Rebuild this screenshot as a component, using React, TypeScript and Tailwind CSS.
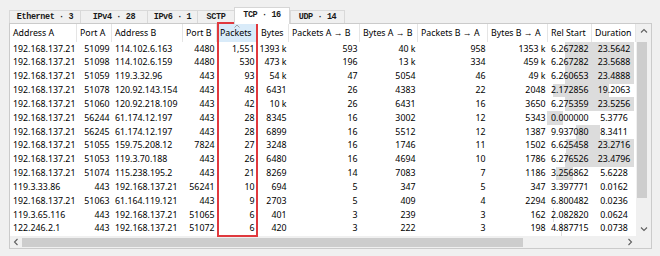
import React from "react";

type Col = { label: string; w: number; align: "l" | "r" | "c" };

const cols: Col[] = [
  { label: "Address A", w: 67, align: "l" },
  { label: "Port A", w: 35, align: "r" },
  { label: "Address B", w: 71, align: "l" },
  { label: "Port B", w: 34, align: "r" },
  { label: "Packets", w: 41, align: "r" },
  { label: "Bytes", w: 31, align: "r" },
  { label: "Packets A \u2192 B", w: 71, align: "r" },
  { label: "Bytes A \u2192 B", w: 58, align: "r" },
  { label: "Packets B \u2192 A", w: 70, align: "r" },
  { label: "Bytes B \u2192 A", w: 60, align: "r" },
  { label: "Rel Start", w: 44, align: "l" },
  { label: "Duration", w: 44, align: "c" },
];

const rows: string[][] = [
  ["192.168.137.21", "51099", "114.102.6.163", "4480", "1,551", "1393 k", "593", "40 k", "958", "1353 k", "6.267282", "23.5642"],
  ["192.168.137.21", "51098", "114.102.6.159", "4480", "530", "473 k", "196", "13 k", "334", "459 k", "6.267282", "23.5688"],
  ["192.168.137.21", "51059", "119.3.32.96", "443", "93", "54 k", "47", "5054", "46", "49 k", "6.260653", "23.4888"],
  ["192.168.137.21", "51078", "120.92.143.154", "443", "48", "6431", "26", "4383", "22", "2048", "2.172856", "19.2063"],
  ["192.168.137.21", "51060", "120.92.218.109", "443", "42", "10 k", "26", "6431", "16", "3650", "6.275359", "23.5256"],
  ["192.168.137.21", "56244", "61.174.12.197", "443", "28", "8345", "16", "3002", "12", "5343", "0.000000", "5.3776"],
  ["192.168.137.21", "56245", "61.174.12.197", "443", "28", "6899", "16", "5512", "12", "1387", "9.937080", "8.3411"],
  ["192.168.137.21", "51055", "159.75.208.12", "7824", "27", "3248", "16", "1746", "11", "1502", "6.625458", "23.2716"],
  ["192.168.137.21", "51053", "119.3.70.188", "443", "26", "6480", "16", "4694", "10", "1786", "6.276526", "23.4796"],
  ["192.168.137.21", "51074", "115.238.195.2", "443", "21", "8269", "14", "7083", "7", "1186", "3.256862", "5.6228"],
  ["119.3.33.86", "443", "192.168.137.21", "56241", "10", "694", "5", "347", "5", "347", "3.397771", "0.0162"],
  ["192.168.137.21", "51063", "61.164.119.121", "443", "9", "2703", "5", "409", "4", "2294", "6.800482", "0.0236"],
  ["119.3.65.116", "443", "192.168.137.21", "51065", "6", "401", "3", "239", "3", "162", "2.082820", "0.0624"],
  ["122.246.2.1", "443", "192.168.137.21", "51072", "6", "420", "3", "222", "3", "198", "4.887715", "0.0738"],
];

const tabs = [
  { label: "Ethernet \u00b7 3", w: 71 },
  { label: "IPv4 \u00b7 28", w: 67 },
  { label: "IPv6 \u00b7 1", w: 50 },
  { label: "SCTP", w: 37 },
  { label: "TCP \u00b7 16", w: 56, sel: true },
  { label: "UDP \u00b7 14", w: 55 },
];

const T = 29.84;
const barLeft = 537;
const barSpan = 87;

function Chevron({ dir }: { dir: "up" | "down" | "left" | "right" }) {
  const d =
    dir === "up"
      ? "M1 4.5 L4 1.5 L7 4.5"
      : dir === "down"
      ? "M1 1.5 L4 4.5 L7 1.5"
      : dir === "left"
      ? "M4.5 1 L1.5 4 L4.5 7"
      : "M1.5 1 L4.5 4 L1.5 7";
  const w = dir === "up" || dir === "down" ? 8 : 6;
  const h = dir === "up" || dir === "down" ? 6 : 8;
  return (
    <svg width={w} height={h} viewBox={`0 0 ${w} ${h}`} fill="none">
      <path d={d} stroke="#606060" strokeWidth="1.1" />
    </svg>
  );
}

export default function App() {
  return (
    <div className="relative w-[660px] h-[256px] overflow-hidden bg-[#f0f0f0] font-['Noto_Sans','Open_Sans',sans-serif] text-black">
      <div className="pt-[7px] pl-[9px]">
        {/* tabs */}
        <div className="flex items-end h-[16px]">
          {tabs.map((t) =>
            t.sel ? (
              <div
                key={t.label}
                style={{ width: t.w }}
                className="relative z-10 h-[17px] -mb-px bg-white border border-b-0 border-[#d6d6d6] flex items-center justify-center font-['Liberation_Mono',monospace] font-bold text-[8.5px] tracking-[-0.4px] text-[#1a1a1a] whitespace-pre pb-[1px]"
              >
                {t.label}
              </div>
            ) : (
              <div
                key={t.label}
                style={{ width: t.w }}
                className="h-[13px] bg-[#f0f0f0] border-t border-l last:border-r border-[#d9d9d9] flex items-center justify-center font-['Liberation_Mono',monospace] font-bold text-[8.5px] tracking-[-0.4px] text-[#1a1a1a] whitespace-pre"
              >
                {t.label}
              </div>
            )
          )}
        </div>

        {/* panel */}
        <div className="w-[643px] h-[226px] border border-[#cbcbcb] bg-white flex flex-col">
          <div className="flex h-[212px]">
            {/* table */}
            <div className="w-[626px] flex flex-col text-[8.8px] leading-none">
              <div className="flex h-[18px]">
                {cols.map((c, i) => (
                  <div
                    key={c.label}
                    style={{ width: c.w }}
                    className={
                      "relative h-full flex items-center pl-[3px] whitespace-nowrap overflow-hidden border-r border-[#e5e5e5] " +
                      (i === 4 ? "bg-[#d9ebf9]" : "")
                    }
                  >
                    {i === 4 && (
                      <div className="absolute top-[0px] left-[17px]">
                        <svg width="6" height="4" viewBox="0 0 6 4" fill="none">
                          <path d="M0.5 3.5 L3 1 L5.5 3.5" stroke="#9a9a9a" strokeWidth="0.9" />
                        </svg>
                      </div>
                    )}
                    {c.label}
                  </div>
                ))}
              </div>
              {rows.map((r, ri) => {
                const start = parseFloat(r[10]);
                const dur = parseFloat(r[11]);
                return (
                  <div key={ri} className="relative flex h-[13.857px]">
                    <div
                      className="absolute top-0 bottom-0 bg-[#dcdcdc]"
                      style={{
                        left: barLeft + (start / T) * barSpan,
                        width: Math.max(0, (dur / T) * barSpan),
                      }}
                    />
                    {r.map((v, ci) => {
                      const c = cols[ci];
                      const al =
                        c.align === "l"
                          ? "justify-start pl-[3px]"
                          : c.align === "c"
                          ? "justify-center"
                          : ci === 4
                          ? "justify-end pr-[3.5px]"
                          : "justify-end pr-[2.5px]";
                      return (
                        <div
                          key={ci}
                          style={{ width: c.w }}
                          className={"relative flex items-center whitespace-nowrap " + al}
                        >
                          {v}
                        </div>
                      );
                    })}
                  </div>
                );
              })}
            </div>
            {/* vertical scrollbar */}
            <div className="w-[15px] bg-[#f0f0f0] flex flex-col">
              <div className="h-[14px] flex items-center justify-center">
                <Chevron dir="up" />
              </div>
              <div className="mt-[4px] ml-px w-[10px] h-[156px] bg-[#cdcdcd]" />
              <div className="flex-1" />
              <div className="h-[14px] flex items-center justify-center">
                <Chevron dir="down" />
              </div>
            </div>
          </div>
          {/* horizontal scrollbar */}
          <div className="flex h-[12px] bg-[#f0f0f0]">
            <div className="w-[626px] flex items-center">
              <div className="w-[11px] flex items-center justify-center">
                <Chevron dir="left" />
              </div>
              <div className="ml-px w-[501px] h-[9px] bg-[#cdcdcd]" />
              <div className="flex-1" />
              <div className="w-[12px] flex items-center justify-center">
                <Chevron dir="right" />
              </div>
            </div>
            <div className="w-[15px] bg-[#f0f0f0]" />
          </div>
        </div>
      </div>

      {/* red highlight box */}
      <div className="absolute left-[217px] top-[22px] w-[41px] h-[215px] border-2 border-[#e0393e] pointer-events-none" />
    </div>
  );
}
